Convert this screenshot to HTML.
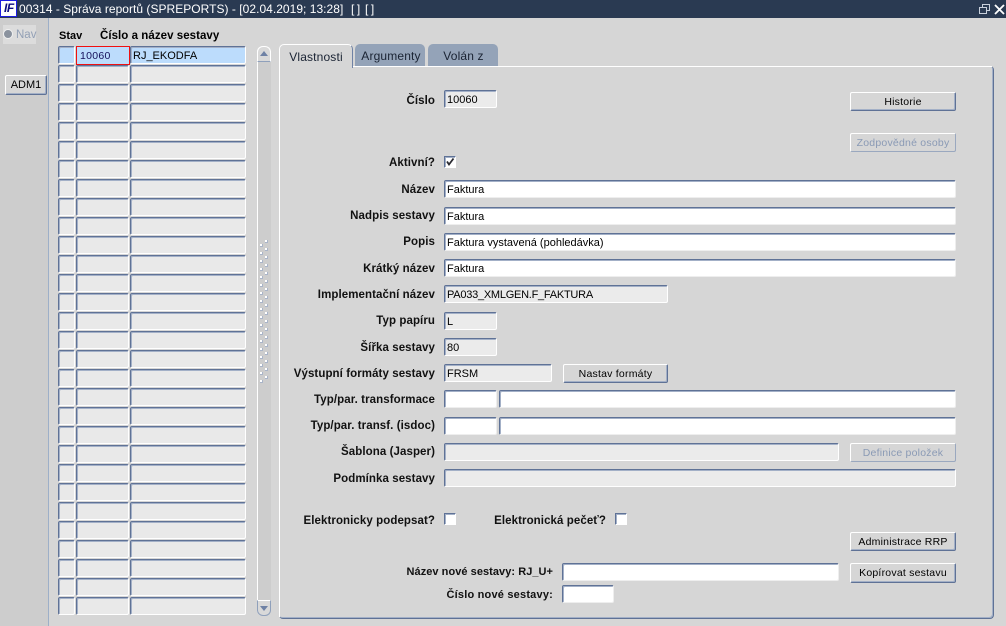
<!DOCTYPE html>
<html><head><meta charset="utf-8"><style>
html,body{margin:0;padding:0}
body{width:1006px;height:626px;position:relative;overflow:hidden;background:#d6d6d6;font:11px "Liberation Sans",sans-serif;color:#000}
div{position:absolute;box-sizing:border-box;white-space:nowrap}
.c{height:18px;top:0;background:#e9e9e9;border-top:1px solid #5f7296;border-left:1px solid #5f7296;border-right:1px solid #fff;border-bottom:1px solid #fff;border-radius:2px;box-shadow:inset 1px 1px 0 #a3b0c7}
.r{left:0;width:260px;height:19px}
.a{left:58px;width:17px}.b{left:76px;width:53px}.d{left:130px;width:116px}
.f{height:18px;background:#fff;border-top:1px solid #5f7296;border-left:1px solid #5f7296;border-right:1px solid #eee;border-bottom:1px solid #eee;border-radius:2px;padding-left:2px;line-height:18px;font-size:11px;box-shadow:inset 1px 1px 0 #a3b0c7}
.g{background:#ebebeb;border-right:1px solid #fff;border-bottom:1px solid #fff}
.l{right:571px;font-weight:bold;line-height:14px;font-size:11.5px;letter-spacing:.08px;color:#111}
.btn{left:850px;width:106px;height:19px;text-align:center;background:#d6d6d6;border-top:1px solid #fff;border-left:1px solid #fff;border-right:1px solid #5f7296;border-bottom:1px solid #5f7296;border-radius:2px;line-height:18px;font-size:10.5px;letter-spacing:.22px;box-shadow:inset -1px -1px 0 #a3b0c7}
.off{color:#8a9ab5;border-right-color:#9aa8bf;border-bottom-color:#9aa8bf;box-shadow:none}
.tab{top:44px;height:22px;background:#94a3b8;border-radius:5px 5px 0 0;text-align:center;font-size:12px;line-height:25px;letter-spacing:.15px;color:#1a2333}
.cb{width:12px;height:12px;background:#fff;border-top:1px solid #5f7296;border-left:1px solid #5f7296;border-right:1px solid #fff;border-bottom:1px solid #fff;box-shadow:inset 1px 1px 0 #a3b0c7}
.dot{width:3px;height:3px;background:#fff;border-right:1px solid #a9b4c8;border-bottom:1px solid #a9b4c8}
</style></head><body>

<div style="left:0;top:0;width:1006px;height:18px;background:#2a3a52"></div>
<div style="left:0;top:0;width:17px;height:17px;background:#fff;border:1px solid #1d1de0"></div>
<div style="left:4px;top:0;width:13px;height:17px;font:italic bold 12px/16px 'Liberation Sans',sans-serif;color:#0b0b80;letter-spacing:-.5px">IF</div>
<div style="left:19px;top:0;height:18px;line-height:18px;font-size:12px;letter-spacing:.03px;color:#fff">00314 - Správa reportů (SPREPORTS) - [02.04.2019; 13:28]</div>
<div style="left:351px;top:0;height:18px;line-height:18px;font-size:12px;letter-spacing:-.4px;color:#fff">[ ]</div>
<div style="left:365px;top:0;height:18px;line-height:18px;font-size:12px;letter-spacing:-.4px;color:#fff">[ ]</div>
<svg style="position:absolute;left:976px;top:2px" width="30" height="14"><path d="M3.500 5.500h7v6h-7zM6.500 5V2.500h7v6H11" fill="none" stroke="#c8d0dc" stroke-width="1"/><path d="M19 3l9 9M28 3l-9 9" stroke="#fff" stroke-width="1.800"/></svg>

<div style="left:0;top:18px;width:48px;height:608px;background:#cdcdcd"></div>
<div style="left:48px;top:18px;width:1px;height:608px;background:#9dafc8"></div>
<div style="left:3px;top:25px;width:33px;height:19px;background:#dcdcdc"></div>
<div style="left:3px;top:29px;width:10px;height:10px;border-radius:50%;background:#8a929e;border:1.500px solid #f0f0f0"></div>
<div style="left:16px;top:28px;font-size:11.500px;line-height:14px;color:#93a0b5">Nav</div>
<div class="btn" style="left:5px;top:75px;width:42px;height:20px;line-height:19px;font-size:11px;letter-spacing:0">ADM1</div>

<div style="left:59px;top:29px;font-weight:bold;font-size:11px;line-height:14px">Stav</div>
<div style="left:100px;top:29px;font-weight:bold;font-size:11.500px;line-height:14px;letter-spacing:.05px">Číslo a název sestavy</div>

<div class="r" style="top:46px"><div class="c a" style="background:#bcdcfc"></div><div class="c b" style="background:#bcdcfc;border:1px solid #f01010;border-radius:0;box-shadow:none;padding-left:3px;line-height:18px;height:19px;width:54px;color:#15105a;font-size:10.500px;letter-spacing:.3px">10060</div><div class="c d" style="background:#bcdcfc;padding-left:2px;line-height:18px;font-size:11px">RJ_EKODFA</div></div>
<div class="r" style="top:65px"><div class="c a"></div><div class="c b"></div><div class="c d"></div></div>
<div class="r" style="top:84px"><div class="c a"></div><div class="c b"></div><div class="c d"></div></div>
<div class="r" style="top:103px"><div class="c a"></div><div class="c b"></div><div class="c d"></div></div>
<div class="r" style="top:122px"><div class="c a"></div><div class="c b"></div><div class="c d"></div></div>
<div class="r" style="top:141px"><div class="c a"></div><div class="c b"></div><div class="c d"></div></div>
<div class="r" style="top:160px"><div class="c a"></div><div class="c b"></div><div class="c d"></div></div>
<div class="r" style="top:179px"><div class="c a"></div><div class="c b"></div><div class="c d"></div></div>
<div class="r" style="top:198px"><div class="c a"></div><div class="c b"></div><div class="c d"></div></div>
<div class="r" style="top:217px"><div class="c a"></div><div class="c b"></div><div class="c d"></div></div>
<div class="r" style="top:236px"><div class="c a"></div><div class="c b"></div><div class="c d"></div></div>
<div class="r" style="top:255px"><div class="c a"></div><div class="c b"></div><div class="c d"></div></div>
<div class="r" style="top:274px"><div class="c a"></div><div class="c b"></div><div class="c d"></div></div>
<div class="r" style="top:293px"><div class="c a"></div><div class="c b"></div><div class="c d"></div></div>
<div class="r" style="top:312px"><div class="c a"></div><div class="c b"></div><div class="c d"></div></div>
<div class="r" style="top:331px"><div class="c a"></div><div class="c b"></div><div class="c d"></div></div>
<div class="r" style="top:350px"><div class="c a"></div><div class="c b"></div><div class="c d"></div></div>
<div class="r" style="top:369px"><div class="c a"></div><div class="c b"></div><div class="c d"></div></div>
<div class="r" style="top:388px"><div class="c a"></div><div class="c b"></div><div class="c d"></div></div>
<div class="r" style="top:407px"><div class="c a"></div><div class="c b"></div><div class="c d"></div></div>
<div class="r" style="top:426px"><div class="c a"></div><div class="c b"></div><div class="c d"></div></div>
<div class="r" style="top:445px"><div class="c a"></div><div class="c b"></div><div class="c d"></div></div>
<div class="r" style="top:464px"><div class="c a"></div><div class="c b"></div><div class="c d"></div></div>
<div class="r" style="top:483px"><div class="c a"></div><div class="c b"></div><div class="c d"></div></div>
<div class="r" style="top:502px"><div class="c a"></div><div class="c b"></div><div class="c d"></div></div>
<div class="r" style="top:521px"><div class="c a"></div><div class="c b"></div><div class="c d"></div></div>
<div class="r" style="top:540px"><div class="c a"></div><div class="c b"></div><div class="c d"></div></div>
<div class="r" style="top:559px"><div class="c a"></div><div class="c b"></div><div class="c d"></div></div>
<div class="r" style="top:578px"><div class="c a"></div><div class="c b"></div><div class="c d"></div></div>
<div class="r" style="top:597px"><div class="c a"></div><div class="c b"></div><div class="c d"></div></div>

<div style="left:257px;top:46px;width:14px;height:570px;background:#cdcdcd;border-left:1px solid #fff;border-radius:6px"></div>
<div style="left:257px;top:46px;width:14px;height:16px;background:#d9d9d9;border:1px solid #fff;border-bottom:1px solid #8fa0bb;border-radius:6px 6px 0 0"></div>
<svg style="position:absolute;left:259px;top:50px" width="10" height="8"><path d="M1 6h8L5 1z" fill="#6f82a5"/></svg>
<div style="left:257px;top:600px;width:14px;height:16px;background:#d9d9d9;border:1px solid #8fa0bb;border-top:1px solid #fff;border-radius:0 0 6px 6px"></div>
<svg style="position:absolute;left:259px;top:604px" width="10" height="8"><path d="M1 2h8L5 7z" fill="#6f82a5"/></svg>

<div class="dot" style="left:260px;top:244px"></div><div class="dot" style="left:265px;top:240px"></div>
<div class="dot" style="left:260px;top:252px"></div><div class="dot" style="left:265px;top:248px"></div>
<div class="dot" style="left:260px;top:260px"></div><div class="dot" style="left:265px;top:256px"></div>
<div class="dot" style="left:260px;top:268px"></div><div class="dot" style="left:265px;top:264px"></div>
<div class="dot" style="left:260px;top:276px"></div><div class="dot" style="left:265px;top:272px"></div>
<div class="dot" style="left:260px;top:284px"></div><div class="dot" style="left:265px;top:280px"></div>
<div class="dot" style="left:260px;top:292px"></div><div class="dot" style="left:265px;top:288px"></div>
<div class="dot" style="left:260px;top:300px"></div><div class="dot" style="left:265px;top:296px"></div>
<div class="dot" style="left:260px;top:308px"></div><div class="dot" style="left:265px;top:304px"></div>
<div class="dot" style="left:260px;top:316px"></div><div class="dot" style="left:265px;top:312px"></div>
<div class="dot" style="left:260px;top:324px"></div><div class="dot" style="left:265px;top:320px"></div>
<div class="dot" style="left:260px;top:332px"></div><div class="dot" style="left:265px;top:328px"></div>
<div class="dot" style="left:260px;top:340px"></div><div class="dot" style="left:265px;top:336px"></div>
<div class="dot" style="left:260px;top:348px"></div><div class="dot" style="left:265px;top:344px"></div>
<div class="dot" style="left:260px;top:356px"></div><div class="dot" style="left:265px;top:352px"></div>
<div class="dot" style="left:260px;top:364px"></div><div class="dot" style="left:265px;top:360px"></div>
<div class="dot" style="left:260px;top:372px"></div><div class="dot" style="left:265px;top:368px"></div>
<div class="dot" style="left:260px;top:380px"></div><div class="dot" style="left:265px;top:376px"></div>

<div style="left:279px;top:66px;width:715px;height:553px;background:#d6d6d6;border-radius:4px;border-right:1px solid #5f7296;border-bottom:1px solid #5f7296;box-shadow:inset -1px -1px 0 #a3b0c7"></div>
<div style="left:279px;top:66px;width:713px;height:1px;background:#fff"></div>
<div style="left:279px;top:66px;width:1px;height:551px;background:#fff"></div>
<div class="tab" style="left:355px;width:70px;padding-left:2px">Argumenty</div>
<div class="tab" style="left:428px;width:70px;padding-left:1px">Volán z</div>
<div class="tab" style="left:279px;width:74px;height:24px;background:#d6d6d6;border-top:1px solid #fff;border-left:1px solid #fff;border-right:1px solid #6f82a5;line-height:24px">Vlastnosti</div>

<div class="l" style="top:94px">Číslo</div>
<div class="l" style="top:156px">Aktivní?</div>
<div class="l" style="top:183px">Název</div>
<div class="l" style="top:209px">Nadpis sestavy</div>
<div class="l" style="top:235px">Popis</div>
<div class="l" style="top:262px">Krátký název</div>
<div class="l" style="top:288px">Implementační název</div>
<div class="l" style="top:314px">Typ papíru</div>
<div class="l" style="top:341px">Šířka sestavy</div>
<div class="l" style="top:367px">Výstupní formáty sestavy</div>
<div class="l" style="top:393px">Typ/par. transformace</div>
<div class="l" style="top:419px">Typ/par. transf. (isdoc)</div>
<div class="l" style="top:445px">Šablona (Jasper)</div>
<div class="l" style="top:472px">Podmínka sestavy</div>
<div class="l" style="top:514px">Elektronicky podepsat?</div>
<div class="l" style="top:514px;right:400px">Elektronická pečeť?</div>
<div class="l" style="top:565px;right:453px;font-size:11px;letter-spacing:.05px">Název nové sestavy: RJ_U+</div>
<div class="l" style="top:588px;right:453px;font-size:11px;letter-spacing:.2px">Číslo nové sestavy:</div>

<div class="f g" style="left:444px;top:90px;width:53px">10060</div>
<div class="f" style="left:444px;top:180px;width:512px">Faktura</div>
<div class="f" style="left:444px;top:207px;width:512px">Faktura</div>
<div class="f" style="left:444px;top:233px;width:512px">Faktura vystavená (pohledávka)</div>
<div class="f" style="left:444px;top:259px;width:512px">Faktura</div>
<div class="f g" style="left:444px;top:285px;width:224px;letter-spacing:-.25px">PA033_XMLGEN.F_FAKTURA</div>
<div class="f g" style="left:444px;top:312px;width:53px">L</div>
<div class="f g" style="left:444px;top:338px;width:53px">80</div>
<div class="f g" style="left:444px;top:364px;width:108px">FRSM</div>
<div class="f" style="left:444px;top:390px;width:53px"></div>
<div class="f" style="left:499px;top:390px;width:457px"></div>
<div class="f" style="left:444px;top:417px;width:53px"></div>
<div class="f" style="left:499px;top:417px;width:457px"></div>
<div class="f g" style="left:444px;top:443px;width:395px"></div>
<div class="f g" style="left:444px;top:469px;width:512px"></div>
<div class="f" style="left:562px;top:563px;width:277px"></div>
<div class="f" style="left:562px;top:585px;width:52px"></div>

<div class="cb" style="left:444px;top:156px"></div>
<svg style="position:absolute;left:444px;top:155px" width="13" height="13"><path d="M3 6.500l2 3 4.500-6" fill="none" stroke="#2a2a30" stroke-width="1.800"/></svg>
<div class="cb" style="left:444px;top:513px"></div>
<div class="cb" style="left:615px;top:513px"></div>

<div class="btn" style="top:92px">Historie</div>
<div class="btn off" style="top:133px">Zodpovědné osoby</div>
<div class="btn" style="left:563px;top:364px;width:105px">Nastav formáty</div>
<div class="btn off" style="top:443px">Definice položek</div>
<div class="btn" style="top:532px">Administrace RRP</div>
<div class="btn" style="top:563px;height:20px;line-height:19px">Kopírovat sestavu</div>
</body></html>
